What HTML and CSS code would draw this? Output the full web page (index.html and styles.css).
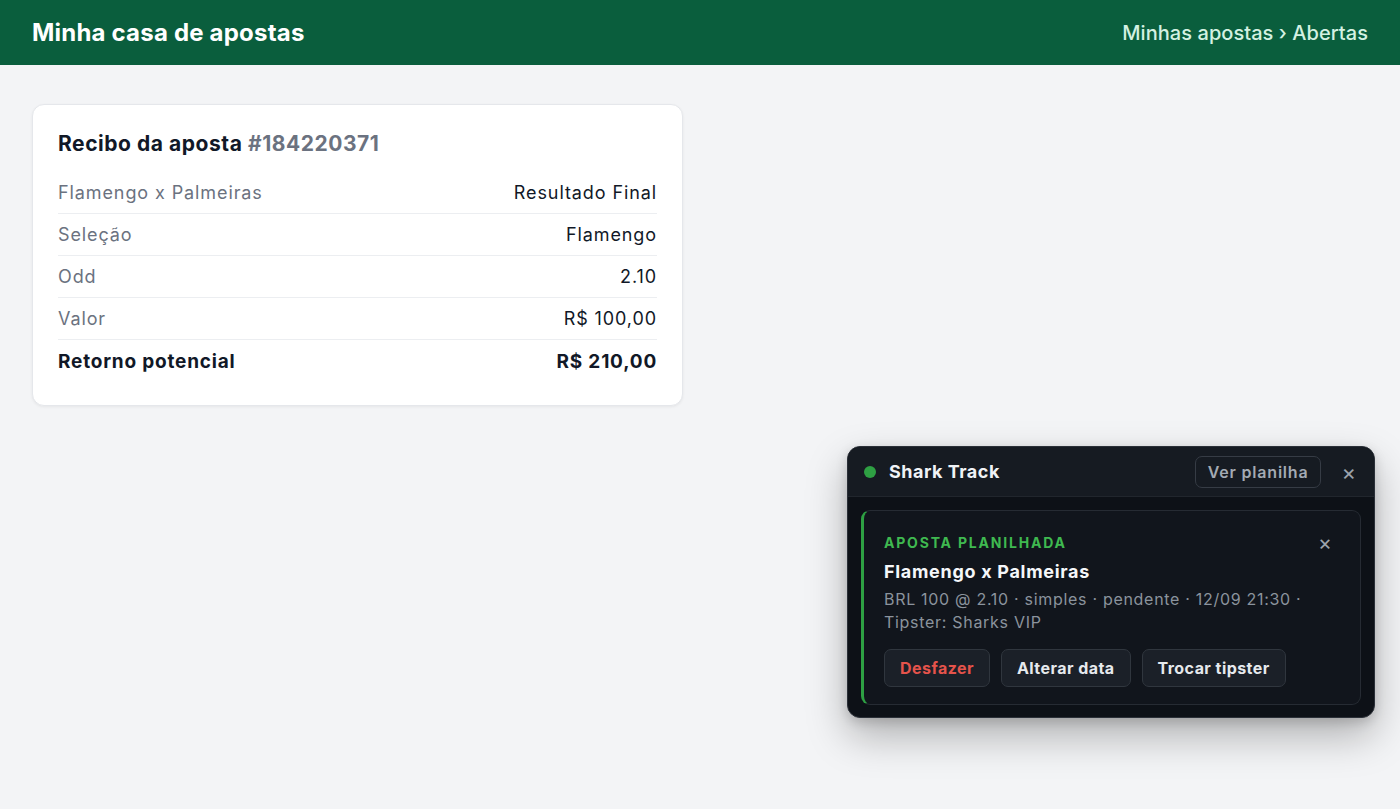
FILE: index.html
```html
<!DOCTYPE html>
<html lang="pt-BR">
<head>
<meta charset="utf-8">
<title>Minha casa de apostas</title>
<link rel="stylesheet" href="styles.css">
</head>
<body>
<header class="topbar">
  <div class="brand">Minha casa de apostas</div>
  <nav class="crumbs">Minhas apostas › Abertas</nav>
</header>
<main class="content">
  <section class="receipt">
    <h1 class="receipt-title">Recibo da aposta <span class="receipt-id">#184220371</span></h1>
    <div class="row"><span class="label">Flamengo x Palmeiras</span><span class="value">Resultado Final</span></div>
    <div class="row"><span class="label">Seleção</span><span class="value">Flamengo</span></div>
    <div class="row"><span class="label">Odd</span><span class="value">2.10</span></div>
    <div class="row"><span class="label">Valor</span><span class="value">R$ 100,00</span></div>
    <div class="row total"><span class="label">Retorno potencial</span><span class="value">R$ 210,00</span></div>
  </section>
</main>
<aside class="widget">
  <div class="widget-head">
    <span class="dot"></span>
    <span class="widget-name">Shark Track</span>
    <button class="ghost-btn">Ver planilha</button>
    <span class="close">×</span>
  </div>
  <div class="widget-body">
    <div class="toast">
      <div class="toast-top">
        <span class="tag">APOSTA PLANILHADA</span>
        <span class="close small">×</span>
      </div>
      <div class="toast-title">Flamengo x Palmeiras</div>
      <div class="toast-meta">BRL 100 @ 2.10 · simples · pendente · 12/09 21:30 · Tipster: Sharks VIP</div>
      <div class="actions">
        <button class="act danger">Desfazer</button>
        <button class="act">Alterar data</button>
        <button class="act">Trocar tipster</button>
      </div>
    </div>
  </div>
</aside>
</body>
</html>
```
FILE: styles.css
```css
* { box-sizing: border-box; }
html, body { margin: 0; padding: 0; }
body {
  background: #f3f4f6;
  font-family: Inter, "Noto Sans", "Liberation Sans", sans-serif;
  color: #111827;
  width: 1400px;
  height: 809px;
  overflow: hidden;
  position: relative;
}
.topbar {
  height: 65px;
  background: #0a5e3d;
  display: flex;
  align-items: center;
  justify-content: space-between;
  padding: 0 32px;
}
.brand {
  color: #fff;
  font-size: 24px;
  font-weight: 700;
  letter-spacing: 0.2px;
}
.crumbs {
  color: #d4f1e2;
  font-size: 20px;
  font-weight: 500;
  letter-spacing: 0.05px;
}
.content {
  padding: 39px 32px;
}
.receipt {
  width: 651px;
  background: #fff;
  border: 1px solid #e5e7eb;
  border-radius: 12px;
  padding: 25px 25px 23px;
  box-shadow: 0 1px 3px rgba(0,0,0,0.06);
}
.receipt-title {
  margin: 0 0 14px;
  font-size: 21px;
  font-weight: 700;
  line-height: 28px;
  color: #111827;
  letter-spacing: 0.55px;
}
.receipt-id { color: #6b7280; }
.row {
  display: flex;
  justify-content: space-between;
  align-items: center;
  height: 42px;
  font-size: 18px;
  letter-spacing: 0.9px;
  border-bottom: 1px solid #eceef1;
}
.row .label { color: #6b7280; }
.row .value { color: #111827; }
.row.total { border-bottom: none; font-weight: 700; font-size: 19px; letter-spacing: 0.8px; }
.row.total .label, .row.total .value { color: #111827; }

.widget {
  position: absolute;
  left: 847px;
  top: 446px;
  width: 528px;
  height: 272px;
  background: #0d1117;
  border: 1px solid #2b3038;
  border-radius: 13px;
  box-shadow: 0 18px 40px rgba(0,0,0,0.28), 0 4px 12px rgba(0,0,0,0.15);
  overflow: hidden;
  color: #f0f3f6;
}
.widget-head {
  height: 50px;
  background: #161b22;
  border-bottom: 1px solid #21262d;
  display: flex;
  align-items: center;
  padding: 0 18px 0 16px;
}
.dot {
  width: 12px;
  height: 12px;
  border-radius: 50%;
  background: #2ea043;
  margin-right: 13px;
}
.widget-name {
  font-size: 18px;
  font-weight: 700;
  letter-spacing: 0.5px;
  flex: 1;
  color: #f0f3f6;
}
.ghost-btn {
  font-family: inherit;
  background: transparent;
  border: 1px solid #363c45;
  color: #a3aab3;
  font-size: 16px;
  font-weight: 600;
  letter-spacing: 0.8px;
  border-radius: 7px;
  height: 32px;
  padding: 0 12px;
  margin-right: 20px;
}
.close {
  color: #9ca3ab;
  font-size: 22px;
  line-height: 1;
}
.widget-body {
  padding: 13px 13px 12px 13px;
}
.toast {
  background: #11151c;
  border: 1px solid #262b33;
  border-left: 3px solid #2ea043;
  border-radius: 9px;
  padding: 19px 28px 15px 20px;
  height: 195px;
}
.toast-top {
  display: flex;
  justify-content: space-between;
  align-items: center;
  height: 24px;
}
.tag {
  color: #3fb950;
  font-size: 14px;
  font-weight: 700;
  letter-spacing: 1.8px;
}
.close.small { font-size: 21px; }
.toast-title {
  margin-top: 7px;
  font-size: 18px;
  font-weight: 700;
  letter-spacing: 0.7px;
  color: #f5f7fa;
}
.toast-meta {
  margin-top: 6px;
  font-size: 16px;
  line-height: 23px;
  letter-spacing: 0.7px;
  color: #8b939d;
  width: 440px;
}
.actions {
  display: flex;
  gap: 11px;
  margin-top: 15px;
}
.act {
  font-family: inherit;
  height: 38px;
  padding: 0 15px;
  background: #1b2028;
  border: 1px solid #30363e;
  border-radius: 7px;
  color: #e6e9ed;
  font-size: 16px;
  font-weight: 700;
  letter-spacing: 0.45px;
}
.act.danger { color: #e5534b; }
```
